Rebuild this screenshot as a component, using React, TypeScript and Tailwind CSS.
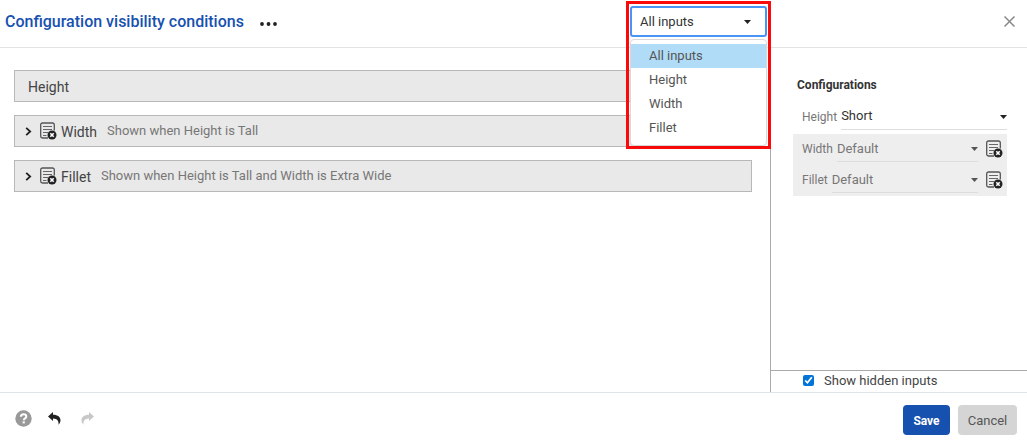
import { useState } from 'react'

const INPUTS = ['All inputs', 'Height', 'Width', 'Fillet']

const CONDITIONS = [
  { name: 'Width', text: 'Shown when Height is Tall' },
  { name: 'Fillet', text: 'Shown when Height is Tall and Width is Extra Wide' },
]

const CONFIGS = [
  { name: 'Height', value: 'Short', hidden: false },
  { name: 'Width', value: 'Default', hidden: true },
  { name: 'Fillet', value: 'Default', hidden: true },
]

function HiddenIcon() {
  return (
    <svg className="w-[17px] h-[18px] shrink-0" viewBox="0 0 17 18" fill="none">
      <path d="M14.3 8.5V2.8A1.8 1.8 0 0 0 12.5 1h-10A1.8 1.8 0 0 0 .7 2.8v11.4A1.8 1.8 0 0 0 2.5 16H8" stroke="#555" strokeWidth="1.3" />
      <path d="M3 4.5h9M3 7.5h9M3 10.5h5M3 13.5h3.5" stroke="#666" strokeWidth="1.2" />
      <circle cx="12" cy="13" r="4.5" fill="#222" />
      <path d="m10.3 11.3 3.4 3.4m0-3.4-3.4 3.4" stroke="#fff" strokeWidth="1.6" />
    </svg>
  )
}

function Caret({ className }: { className: string }) {
  return (
    <svg className={`pointer-events-none absolute w-[7px] h-1 ${className}`} viewBox="0 0 7 4" fill="currentColor">
      <path d="M0 0h7L3.5 4z" />
    </svg>
  )
}

export default function App() {
  const [filter, setFilter] = useState('All inputs')
  const [showHidden, setShowHidden] = useState(true)

  return (
    <div className="flex h-screen flex-col bg-white font-[Roboto,sans-serif] text-[13px] text-[#444]">

      {/* Header */}
      <header className="flex h-12 shrink-0 border-b border-[#e2e2e2]">
        <div className="flex flex-1 pl-[5px]">
          <h1 className="self-center pb-1 text-base font-medium text-[#1651b0]">Configuration visibility conditions</h1>
          <button aria-label="More" className="ml-4 self-center text-[#222]">
            <svg className="h-1 w-[17px]" viewBox="0 0 17 4" fill="currentColor">
              <circle cx="2" cy="2" r="1.9" />
              <circle cx="8.5" cy="2" r="1.9" />
              <circle cx="15" cy="2" r="1.9" />
            </svg>
          </button>

          {/* Filter menu, open over the panels below */}
          <div className="relative ml-auto w-[145px]">
            <div className="absolute inset-x-0 top-px z-10 h-[148px] border-[3px] border-[#fa0a0a] px-px pt-[2px]">
              <div className="relative">
                <select
                  aria-label="Filter inputs"
                  value={filter}
                  onChange={e => setFilter(e.target.value)}
                  className="block h-[31px] w-full appearance-none rounded-[3px] border-2 border-[#4a94f3] bg-white pl-2 text-[#333] outline-none"
                >
                  {INPUTS.map(i => <option key={i}>{i}</option>)}
                </select>
                <Caret className="right-4 top-[14px] text-[#222]" />
              </div>
              <ul role="listbox" aria-label="Inputs" className="mt-[2px] h-[107px] rounded-[4px] border border-[#d8d8d8] bg-white py-1 text-[#555] shadow-xs">
                {INPUTS.map(i => (
                  <li
                    key={i}
                    role="option"
                    aria-selected={i === filter}
                    onClick={() => setFilter(i)}
                    className={`flex h-6 cursor-pointer items-center pl-[18px] ${i === filter ? 'bg-[#b0dcf7]' : ''}`}
                  >
                    {i}
                  </li>
                ))}
              </ul>
            </div>
          </div>
        </div>
        <div className="flex w-64 items-center justify-end pr-3">
          <button aria-label="Close" className="pb-1 text-[#888]">
            <svg className="size-[11px]" viewBox="0 0 11 11" stroke="currentColor" strokeWidth="1.5">
              <path d="m.5.5 10 10m0-10-10 10" />
            </svg>
          </button>
        </div>
      </header>

      <div className="flex min-h-0 flex-1">
        {/* Conditions */}
        <main className="flex flex-1 flex-col gap-[13px] pl-[14px] pr-[18px] pt-[22px]">
          <div className="flex h-8 shrink-0 items-center border border-[#b8b8b8] bg-[#e9e9e9] pl-[13px] pt-px text-sm">Height</div>
          {CONDITIONS.map(c => (
            <div key={c.name} className="flex h-8 shrink-0 items-center border border-[#b8b8b8] bg-[#e9e9e9] pl-[10px]">
              <button aria-label={`Expand ${c.name}`} className="mr-2 text-[#222]">
                <svg className="h-[9px] w-[7px]" viewBox="0 0 7 9" fill="none" stroke="currentColor" strokeWidth="1.8">
                  <path d="m1.2.8 4 3.7-4 3.7" />
                </svg>
              </button>
              <HiddenIcon />
              <span className="ml-1 pt-px text-sm">{c.name}</span>
              <span className="ml-[10px] text-[#777]">{c.text}</span>
            </div>
          ))}
        </main>

        {/* Configurations */}
        <aside className="flex w-[257px] flex-col border-l border-[#aaa]">
          <div className="flex-1 pl-[22px] pr-5 pt-7">
            <h2 className="pl-1 text-xs leading-[18px] font-bold text-[#333]">Configurations</h2>
            <div className="mt-2">
              {CONFIGS.map(c => (
                <div key={c.name} className={`flex items-center pl-[9px] ${c.hidden ? 'h-[31px] bg-[#eee] pb-px pr-1' : 'h-8 pb-[3px]'}`}>
                  <label htmlFor={c.name} className="mr-1 text-xs text-[#777]">{c.name}</label>
                  <div className="relative flex-1">
                    <select
                      id={c.name}
                      defaultValue={c.value}
                      className={`block h-[26px] w-full appearance-none border-b border-[#ddd] bg-transparent outline-none ${c.hidden ? 'text-[#777]' : 'text-[#333]'}`}
                    >
                      <option>{c.value}</option>
                    </select>
                    <Caret className={c.hidden ? 'right-0 top-[11px] text-[#555]' : 'right-0 top-[11px] text-[#222]'} />
                  </div>
                  {c.hidden && <span className="ml-2"><HiddenIcon /></span>}
                </div>
              ))}
            </div>
          </div>
          <label className="flex h-[22px] items-center gap-[10px] border-t border-[#aaa] pb-[2px] pl-8">
            <input
              type="checkbox"
              checked={showHidden}
              onChange={e => setShowHidden(e.target.checked)}
              className="size-[11px] accent-[#0075d7]"
            />
            Show hidden inputs
          </label>
        </aside>
      </div>

      {/* Footer */}
      <footer className="flex h-[49px] shrink-0 items-center border-t border-[#dde3e8] pl-[15px] pr-[10px] pt-[6px]">
        <div className="flex items-center pb-[3px]">
          <button aria-label="Help" className="text-[#999]">
            <svg className="size-[17px]" viewBox="0 0 17 17">
              <circle cx="8.5" cy="8.5" r="8.2" fill="currentColor" />
              <path d="M5.9 6.8c0-1.7 1.1-2.6 2.7-2.6s2.7.9 2.7 2.3c0 1.9-2.5 1.8-2.5 3.7" fill="none" stroke="#fff" strokeWidth="2" />
              <path d="M7.6 11.4h2.2v2H7.6z" fill="#fff" />
            </svg>
          </button>
          <button aria-label="Undo" className="ml-4 text-[#222]">
            <svg className="size-[13px]" viewBox="0 0 13 13" fill="currentColor">
              <path d="M0 4.5 5 0v2.7c5 0 7.5 2.4 7.5 5.6 0 1.8-.8 3.4-2 4.5.5-3.5-1.2-6.3-5.5-6.3V9z" />
            </svg>
          </button>
          <button aria-label="Redo" disabled className="ml-5 text-[#c8c8c8]">
            <svg className="size-[13px]" viewBox="0 0 13 13" fill="currentColor">
              <path d="M13 4.5 8 0v2.7C3 2.7.5 5.1.5 8.3c0 1.8.8 3.4 2 4.5C2 9.3 3.7 6.5 8 6.5V9z" />
            </svg>
          </button>
        </div>
        <button className="ml-auto h-[30px] w-[47px] rounded-[4px] bg-[#1651b0] pt-px text-xs font-bold text-white">Save</button>
        <button className="ml-2 h-[30px] w-[59px] rounded-[4px] bg-[#d5d5d5] pt-px text-[#555]">Cancel</button>
      </footer>
    </div>
  )
}
